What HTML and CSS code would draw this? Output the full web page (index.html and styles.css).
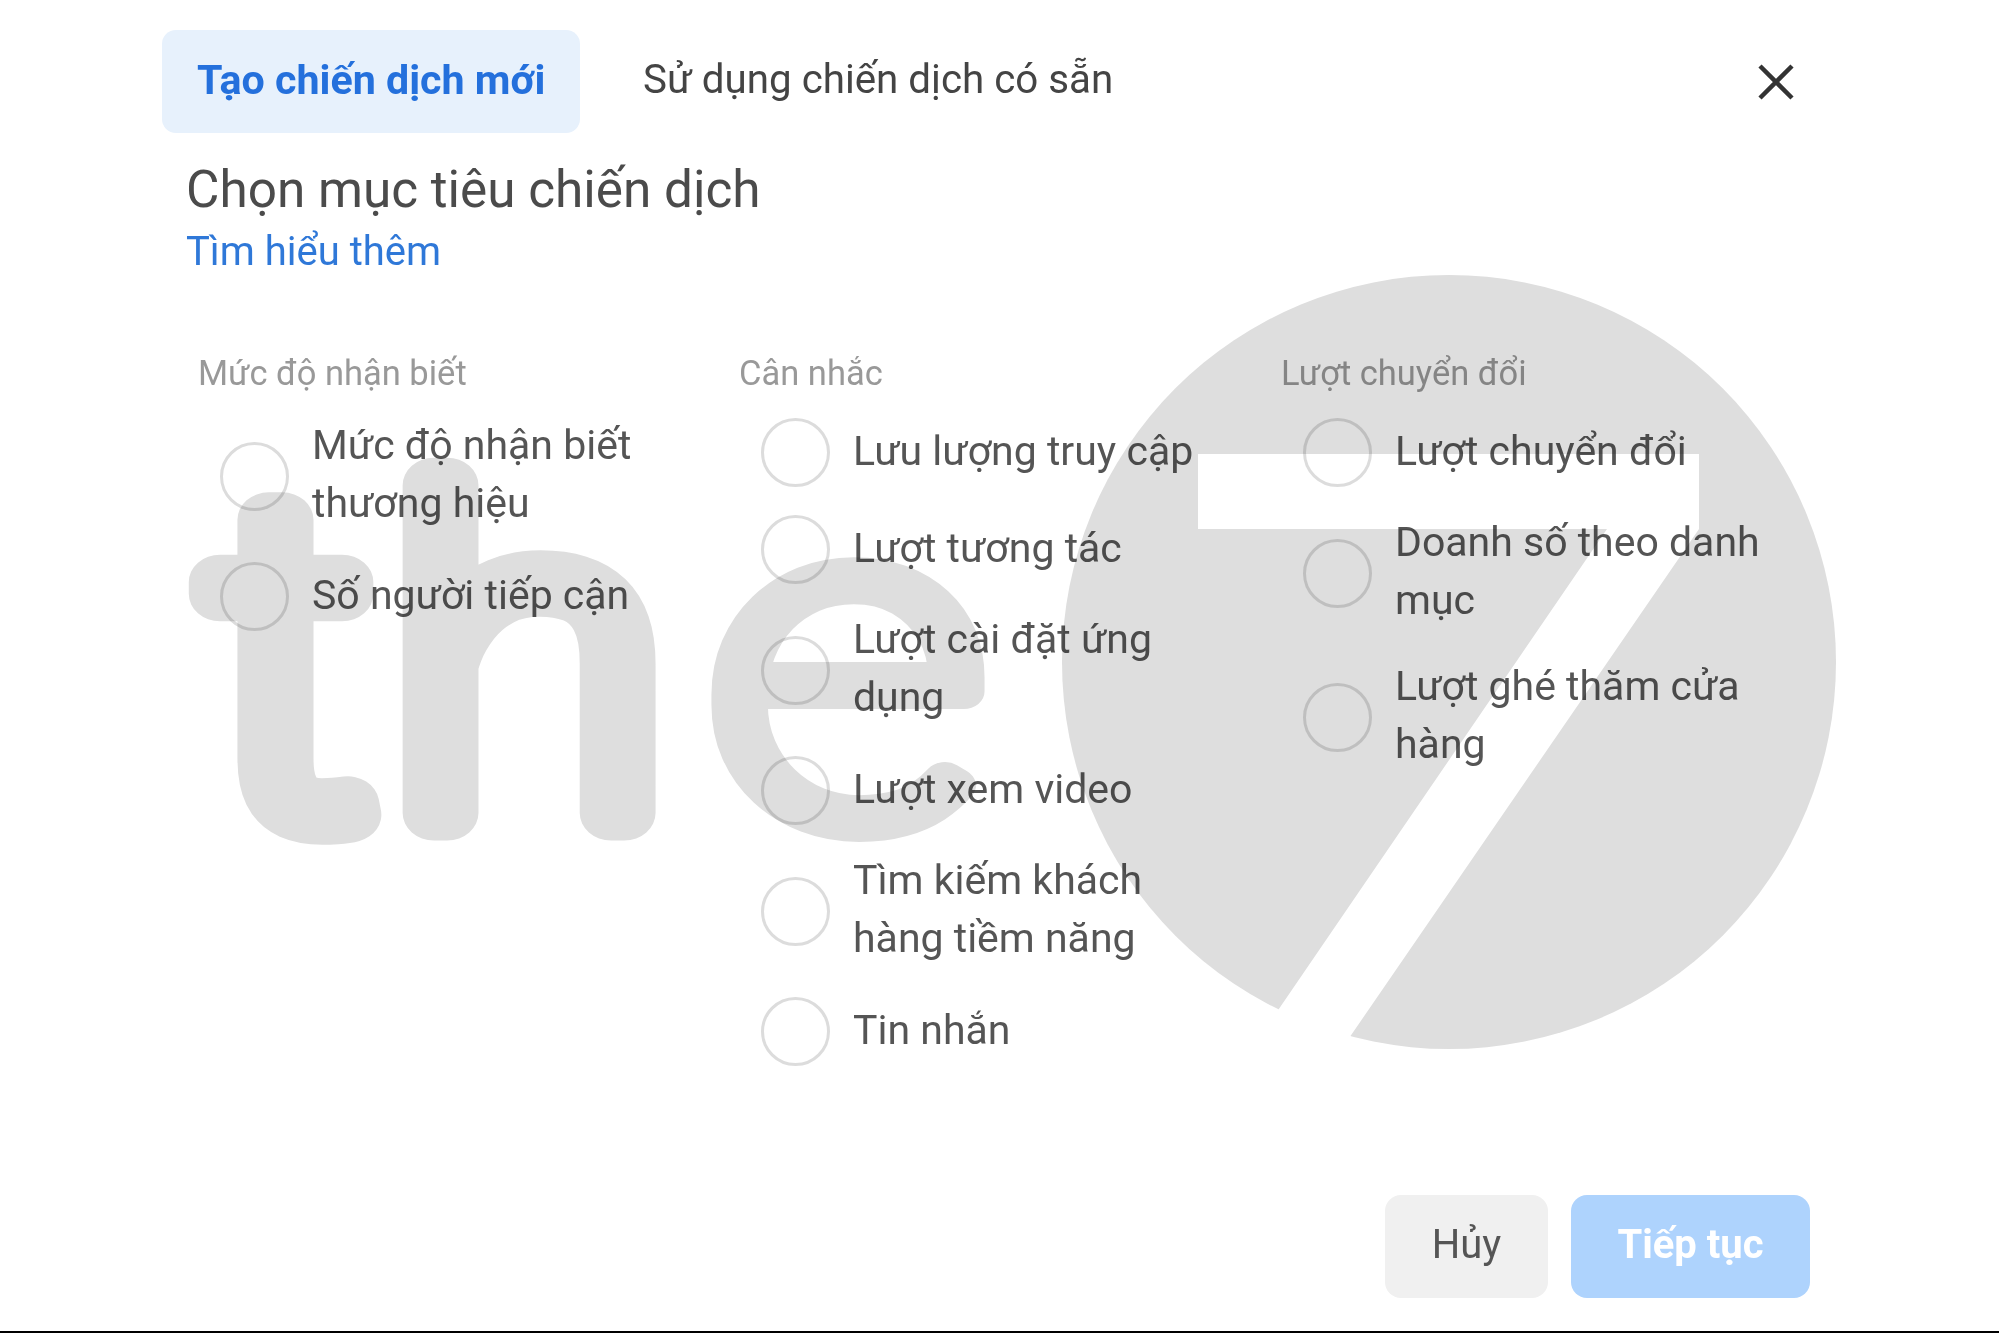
FILE: index.html
```html
<!DOCTYPE html>
<html lang="vi">
<head>
    <meta charset="UTF-8">
    <meta name="viewport" content="width=device-width, initial-scale=1.0">
    <title>Chọn mục tiêu chiến dịch</title>
    <link rel="stylesheet" href="styles.css">
</head>
<body>
    <div class="page">
        <div class="tabs">
            <div class="tab tab-active">Tạo chiến dịch mới</div>
            <div class="tab">Sử dụng chiến dịch có sẵn</div>
            <svg class="close" viewBox="0 0 36 36"><path d="M2 2L34 34M34 2L2 34"/></svg>
        </div>

        <h1 class="title">Chọn mục tiêu chiến dịch</h1>
        <a class="link">Tìm hiểu thêm</a>

        <div class="columns">
            <div class="col">
                <div class="col-label">Mức độ nhận biết</div>
                <div class="option"><span class="radio"></span><span class="option-text">Mức độ nhận biết thương hiệu</span></div>
                <div class="option"><span class="radio"></span><span class="option-text">Số người tiếp cận</span></div>
            </div>
            <div class="col">
                <div class="col-label">Cân nhắc</div>
                <div class="option"><span class="radio"></span><span class="option-text">Lưu lượng truy cập</span></div>
                <div class="option"><span class="radio"></span><span class="option-text">Lượt tương tác</span></div>
                <div class="option"><span class="radio"></span><span class="option-text">Lượt cài đặt ứng dụng</span></div>
                <div class="option"><span class="radio"></span><span class="option-text">Lượt xem video</span></div>
                <div class="option"><span class="radio"></span><span class="option-text">Tìm kiếm khách hàng tiềm năng</span></div>
                <div class="option"><span class="radio"></span><span class="option-text">Tin nhắn</span></div>
            </div>
            <div class="col">
                <div class="col-label">Lượt chuyển đổi</div>
                <div class="option"><span class="radio"></span><span class="option-text">Lượt chuyển đổi</span></div>
                <div class="option"><span class="radio"></span><span class="option-text">Doanh số theo danh mục</span></div>
                <div class="option"><span class="radio"></span><span class="option-text">Lượt ghé thăm cửa hàng</span></div>
            </div>
        </div>

        <div class="actions">
            <button class="btn btn-cancel">Hủy</button>
            <button class="btn btn-next">Tiếp tục</button>
        </div>

        <!--watermark, lies over the dialog-->
        <svg class="watermark" viewBox="0 0 1999 1333" aria-hidden="true">
            <text class="wm-text" y="813" transform="scale(1.14 1)"><tspan x="185">t</tspan><tspan x="344">h</tspan></text>
            <text class="wm-text wm-e" x="591" y="820" transform="scale(1.2 1)">e</text>
            <circle class="wm-fill" cx="1449" cy="662" r="387"/>
            <path class="wm-cut" d="M1198 454H1699V529L1334 1060H1244L1607 529H1198Z"/>
        </svg>
    </div>
</body>
</html>
```

FILE: styles.css
```css
* {
    box-sizing: border-box;
}
body {
    margin: 0;
    background-color: #fff;
    font-family: Roboto, Arial, sans-serif;
    color: #555;
}
.page {
    position: relative;
    height: 1333px;
    padding: 30px 189px 33px 162px;
    border-bottom: 2px solid #000;
    background-color: #fff;
    display: flex;
    flex-direction: column;
    overflow: hidden;
    filter: blur(0.6px);
}
.watermark {
    position: absolute;
    left: 0;
    top: 0;
    width: 1999px;
    height: 1333px;
    mix-blend-mode: multiply;
}
.wm-text {
    font-family: Roboto, sans-serif;
    font-size: 437px;
    font-weight: 100;
    fill: #dedede;
    stroke: #dedede;
    stroke-width: 55px;
    stroke-linejoin: round;
}
.wm-e {
    font-size: 456px;
    stroke-width: 35px;
}
.wm-fill {
    fill: #dedede;
}
.wm-cut {
    fill: #fff;
}
.tabs {
    display: flex;
    align-items: center;
    height: 103px;
}
.tab {
    height: 103px;
    padding: 0 35px;
    margin-right: 28px;
    line-height: 100px;
    font-size: 40.3px;
    color: #444;
    white-space: nowrap;
}
.tab-active {
    width: 418px;
    background-color: #e7f1fc;
    border-radius: 14px;
    color: #2470dc;
    font-size: 41.2px;
    font-weight: 700;
}
.close {
    width: 36px;
    height: 36px;
    margin-left: auto;
    margin-right: 16px;
}
.close path {
    fill: none;
    stroke: #333;
    stroke-width: 4.5;
}
.title {
    margin: 27px 0 0 24px;
    font-size: 51.3px;
    line-height: 60px;
    font-weight: 400;
    color: #4b4b4b;
}
.link {
    margin: 7px 0 0 24px;
    font-size: 40px;
    line-height: 50px;
    color: #2f78d8;
}
.columns {
    display: grid;
    grid-template-columns: 541px 542px 500px;
    margin-top: 73px;
    margin-left: 36px;
}
.col {
    width: 490px;
    display: flex;
    flex-direction: column;
    gap: 28px;
}
.col-label {
    height: 46px;
    margin-bottom: -6px;
    line-height: 46px;
    font-size: 34.5px;
    color: #999;
}
.option {
    display: flex;
    align-items: center;
    padding-left: 22px;
    gap: 23px;
}
.radio {
    flex: none;
    width: 69px;
    height: 69px;
    border: 3px solid #dcdcdc;
    border-radius: 50%;
}
.option-text {
    width: 375px;
    margin: -2px 0 2px;
    font-size: 41px;
    line-height: 58px;
}
.actions {
    display: flex;
    justify-content: flex-end;
    gap: 23px;
    margin-top: auto;
}
.btn {
    height: 103px;
    padding-bottom: 6px;
    border: none;
    border-radius: 16px;
    font-family: Roboto, Arial, sans-serif;
    font-size: 40px;
}
.btn-cancel {
    width: 163px;
    background-color: #f0f0f0;
    color: #555;
}
.btn-next {
    width: 239px;
    background-color: #aed3fd;
    color: #fff;
    font-weight: 700;
}
```
